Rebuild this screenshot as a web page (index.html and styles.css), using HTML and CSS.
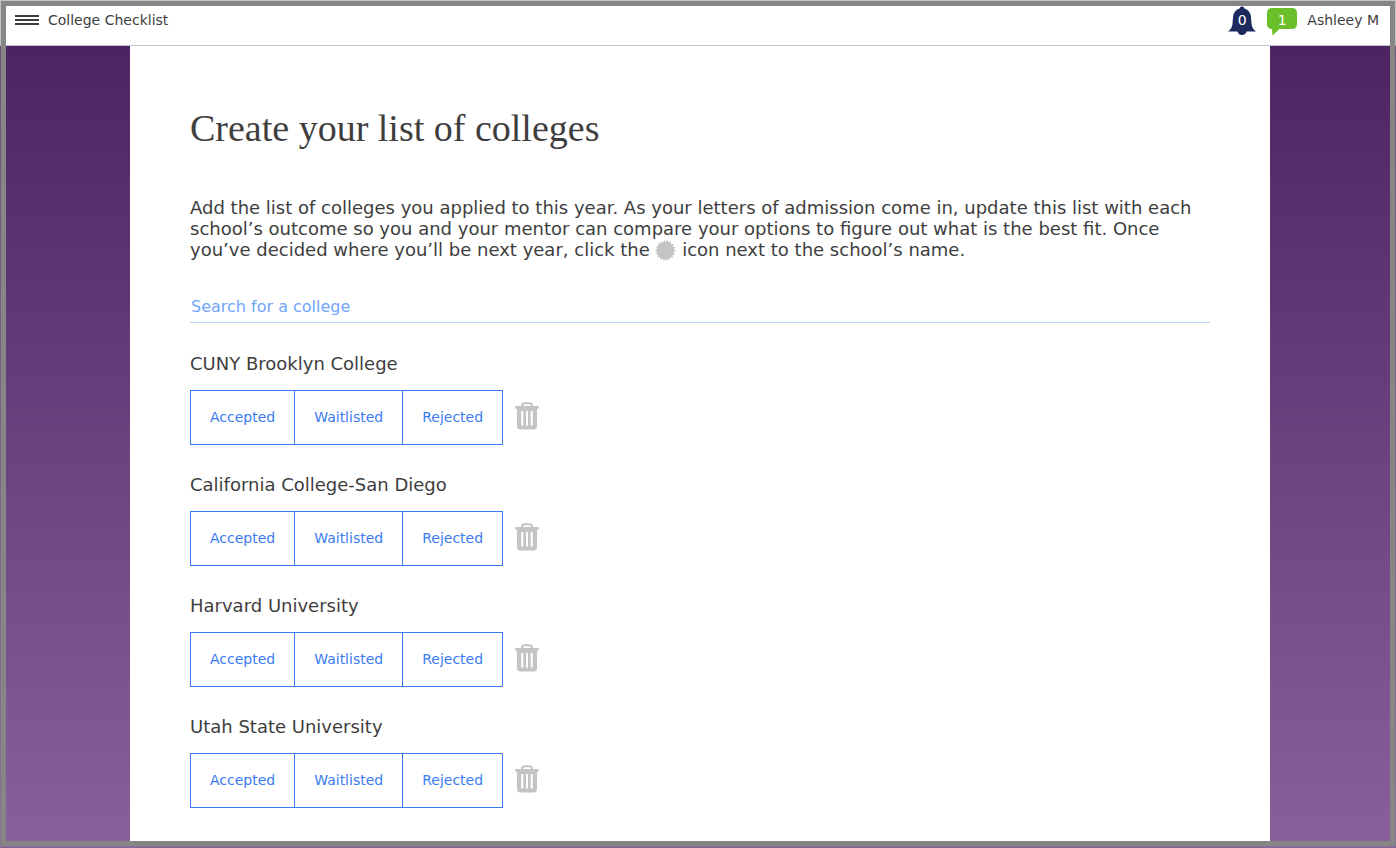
FILE: index.html
```
<!DOCTYPE html>
<html lang="en">
<head>
<meta charset="utf-8">
<meta name="viewport" content="width=device-width, initial-scale=1">
<title>College Checklist</title>
<link rel="stylesheet" href="styles.css">
</head>
<body>
<svg class="sprite" aria-hidden="true">
  <symbol id="trash" viewBox="0 0 24 28">
    <path d="M7 5V4Q7 1.200 9.500 1.200H14.500Q17 1.200 17 4V5" fill="none" stroke="currentColor" stroke-width="2"/>
    <path fill="currentColor" fill-rule="evenodd" d="M1 4H23Q24 4 24 5T23 6.800L22 7.500V24Q22 27.500 18.500 27.500H5.500Q2 27.500 2 24V7.500L1 6.800Q0 6 0 5T1 4ZM6.200 9V23.500H8.300V9ZM11 9V23.500H13V9ZM15.700 9V23.500H17.800V9Z"/>
  </symbol>
</svg>
<header class="topbar">
  <button class="menu" type="button" aria-label="Menu">
    <svg width="24" height="10" viewBox="0 0 24 10"><path d="M0 1H24M0 5H24M0 9H24" stroke="#3c3c3c" stroke-width="2"/></svg>
  </button>
  <span class="topbar-title">College Checklist</span>
  <button class="alerts" type="button" aria-label="Notifications: 0">
    <svg width="28" height="30" viewBox="0 0 28 30"><path fill="#1d2a5e" d="M11.500 2.500Q12 .5 14 .5T16.500 2.500Q22.500 4.500 23 11L23.500 18Q24 22.500 28 25.500H18.500Q17.500 29 14 29T9.500 25.500H0Q4 22.500 4.500 18L5 11Q5.500 4.500 11.500 2.500Z"/></svg>
    <span class="count">0</span>
  </button>
  <button class="messages" type="button" aria-label="Messages: 1">
    <svg width="30" height="30" viewBox="0 0 30 30"><path fill="#6abf2a" d="M5 2H25Q30 2 30 7V18Q30 23 25 23H12.500L5.500 29.500L5 23Q0 23 0 18V7Q0 2 5 2Z"/></svg>
    <span class="count">1</span>
  </button>
  <a class="user" href="#">Ashleey M</a>
</header>
<div class="backdrop">
  <main class="sheet">
    <h1 class="title">Create your list of colleges</h1>
    <p class="intro">Add the list of colleges you applied to this year. As your letters of admission come in, update this list with each school’s outcome so you and your mentor can compare your options to figure out what is the best fit. Once you’ve decided where you’ll be next year, click the <svg class="seal" width="21" height="21" viewBox="0 0 20 20" aria-hidden="true"><path fill="#c4c4c4" d="M10 1.800L11.700 0L12.700 2.300L15 1.300L15.200 3.800L17.700 3.700L17 6.100L19.300 6.900L17.800 8.900L20 10.300L17.800 11.600L19 13.800L16.700 14.200L17.300 16.700L14.900 16.300L14.500 18.800L12.400 17.500L11.200 20L10 18L8.300 20L7.300 17.700L5 18.700L4.800 16.200L2.300 16.300L3 13.900L.7 13.100L2.200 11.100L0 9.700L2.200 8.400L1 6.200L3.300 5.800L2.700 3.300L5.100 3.700L5.500 1.200L7.600 2.500L8.800 0Z"/></svg> icon next to the school’s name.</p>
    <input class="search" type="text" placeholder="Search for a college" aria-label="Search for a college">
    <ul class="colleges">
      <li class="college">
        <h2 class="name">CUNY Brooklyn College</h2>
        <div class="actions">
          <div class="outcomes"><button class="outcome" type="button">Accepted</button><button class="outcome" type="button">Waitlisted</button><button class="outcome" type="button">Rejected</button></div>
          <button class="remove" type="button" aria-label="Remove CUNY Brooklyn College"><svg width="24" height="28"><use href="#trash"/></svg></button>
        </div>
      </li>
      <li class="college">
        <h2 class="name">California College-San Diego</h2>
        <div class="actions">
          <div class="outcomes"><button class="outcome" type="button">Accepted</button><button class="outcome" type="button">Waitlisted</button><button class="outcome" type="button">Rejected</button></div>
          <button class="remove" type="button" aria-label="Remove California College-San Diego"><svg width="24" height="28"><use href="#trash"/></svg></button>
        </div>
      </li>
      <li class="college">
        <h2 class="name">Harvard University</h2>
        <div class="actions">
          <div class="outcomes"><button class="outcome" type="button">Accepted</button><button class="outcome" type="button">Waitlisted</button><button class="outcome" type="button">Rejected</button></div>
          <button class="remove" type="button" aria-label="Remove Harvard University"><svg width="24" height="28"><use href="#trash"/></svg></button>
        </div>
      </li>
      <li class="college">
        <h2 class="name">Utah State University</h2>
        <div class="actions">
          <div class="outcomes"><button class="outcome" type="button">Accepted</button><button class="outcome" type="button">Waitlisted</button><button class="outcome" type="button">Rejected</button></div>
          <button class="remove" type="button" aria-label="Remove Utah State University"><svg width="24" height="28"><use href="#trash"/></svg></button>
        </div>
      </li>
    </ul>
  </main>
</div>
<div class="frame"></div>
</body>
</html>
```
FILE: styles.css
```
* { box-sizing: border-box; }
body {
  margin: 0;
  min-height: 100vh;
  display: flex;
  flex-direction: column;
  color: #3e3e3e;
  background: #fff;
  font: 18px/21px Verdana, "DejaVu Sans", sans-serif;
}
button {
  margin: 0;
  padding: 0;
  border: 0;
  background: none;
  font: inherit;
  color: inherit;
  cursor: pointer;
}
svg { display: block; }
.sprite { position: absolute; width: 0; height: 0; }
.topbar {
  display: flex;
  align-items: center;
  height: 46px;
  padding: 0 17px 4px 15px;
  border-bottom: 1px solid #c6c6c6;
  font-size: 14px;
}
.menu { margin-right: 9px; }
.menu svg { margin-bottom: 2px; }
.topbar-title { margin-right: auto; }
.alerts, .messages { display: grid; place-items: center; margin-right: 11px; }
.messages { margin-right: 10px; }
.alerts svg, .messages svg, .count { grid-area: 1 / 1; }
.count { color: #fff; }
.user { color: inherit; text-decoration: none; }
.backdrop {
  flex: 1;
  padding-left: 4px;
  background: linear-gradient(#4d2463, #88609a);
}
.sheet {
  max-width: 1140px;
  min-height: 100%;
  margin: 0 auto;
  padding: 60px 60px 33px;
  background: #fff;
}
.title {
  margin: 0 0 47px;
  font: 38px/44px Georgia, "Liberation Serif", serif;
}
.intro { margin: 0 0 29px; }
.seal { display: inline-block; vertical-align: -5px; }
.search {
  display: block;
  width: 100%;
  height: 33px;
  padding: 0 1px;
  border: 0;
  border-bottom: 1px solid #b9d3fb;
  background: none;
  font: 16px/20px Verdana, "DejaVu Sans", sans-serif;
  color: #3d7ff5;
}
.search::placeholder { color: #72a4fb; opacity: 1; }
.colleges { margin: 30px 0 0; padding: 0; list-style: none; }
.college + .college { margin-top: 29px; }
.name { margin: 0 0 16px; font: inherit; }
.actions { display: flex; }
.outcomes { display: flex; height: 55px; border: 1px solid #3a7cf4; }
.outcome { padding: 0 19px; font-size: 14px; color: #3a7cf4; }
.outcome + .outcome { border-left: 1px solid #3a7cf4; }
.remove { align-self: flex-start; margin: 12px; color: #c4c4c4; }
.frame {
  position: fixed;
  inset: 1px 1px 2px 1px;
  border: 5px solid #868785;
  outline: 1px solid rgba(134, 135, 133, .5);
  pointer-events: none;
}
```
